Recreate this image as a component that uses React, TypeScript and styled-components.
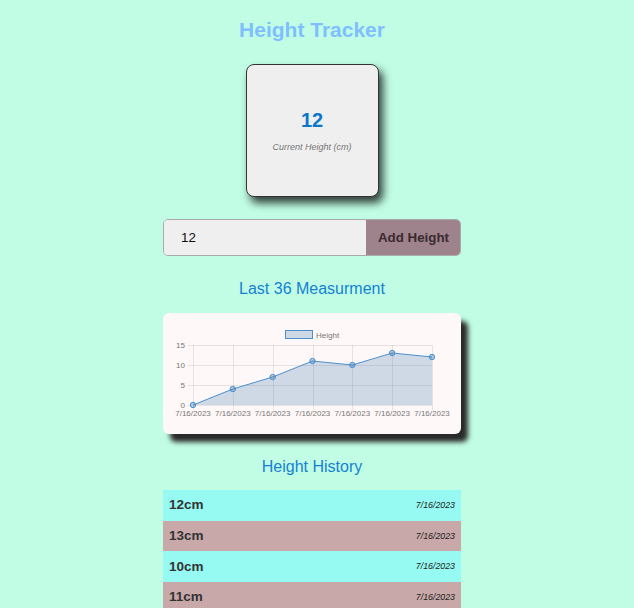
import React, { useState } from "react";
import styled, { createGlobalStyle } from "styled-components";

const Global = createGlobalStyle`
  html, body { margin: 0; padding: 0; overflow: hidden; background: #c0fde4; }
  body { font-family: "Liberation Sans", Arial, sans-serif; }
`;

const Page = styled.div`
  width: 624px;
  display: flex;
  flex-direction: column;
  align-items: center;
`;

const Title = styled.h1`
  margin: 0;
  padding-top: 18px;
  font-size: 21px;
  line-height: 24px;
  font-weight: bold;
  color: #80bfff;
`;

const CurrentCard = styled.div`
  box-sizing: border-box;
  margin-top: 22px;
  width: 133px;
  height: 133px;
  border: 1px solid #333;
  border-radius: 8px;
  background: #efefef;
  box-shadow: 4px 6px 9px rgba(0, 0, 0, 0.75);
  display: flex;
  flex-direction: column;
  align-items: center;
  justify-content: center;
  gap: 10.5px;
`;

const BigValue = styled.div`
  font-size: 20px;
  line-height: 24px;
  font-weight: bold;
  color: #0a77c9;
`;

const SmallLabel = styled.div`
  font-size: 9px;
  line-height: 11px;
  font-style: italic;
  color: #777;
`;

const InputGroup = styled.form`
  box-sizing: border-box;
  margin-top: 22px;
  width: 298px;
  height: 37px;
  display: flex;
  border: 1px solid #aaa;
  border-radius: 5px;
  overflow: hidden;
  background: #efefef;
`;

const HeightInput = styled.input`
  flex: 1;
  min-width: 0;
  border: none;
  outline: none;
  background: #efefef;
  padding: 0 0 0 17px;
  font-family: "Liberation Sans", Arial, sans-serif;
  font-size: 13.333px;
  color: #111;
`;

const AddButton = styled.button`
  border: none;
  background: #9e828c;
  color: #3b2a30;
  font-family: "Liberation Sans", Arial, sans-serif;
  font-size: 13.333px;
  font-weight: bold;
  padding: 0 11px 0 12px;
  cursor: pointer;
`;

const SectionTitle = styled.h2<{ $gapBottom: number }>`
  margin: 24px 0 ${(p) => p.$gapBottom}px;
  font-size: 16px;
  line-height: 18px;
  font-weight: normal;
  color: #1581d3;
`;

const ChartCard = styled.div`
  width: 298px;
  height: 121px;
  border-radius: 6px;
  background: #fff8f8;
  box-shadow: 7px 8px 5px #2a2a2a;
`;

const HistoryList = styled.ul`
  list-style: none;
  margin: 0;
  padding: 0;
  width: 298px;
`;

const HistoryRow = styled.li<{ $alt: boolean }>`
  box-sizing: border-box;
  height: 30.7px;
  padding: 0 6px;
  display: flex;
  align-items: center;
  justify-content: space-between;
  background: ${(p) => (p.$alt ? "#c8a8a8" : "#96faf2")};
  color: #333;
`;

const RowValue = styled.span`
  font-size: 13.5px;
  line-height: 16px;
  font-weight: bold;
`;

const RowDate = styled.span`
  font-size: 8.8px;
  line-height: 11px;
  font-style: italic;
  color: #222;
`;

const data = [0, 4, 7, 11, 10, 13, 12];

function Chart() {
  const left = 30;
  const right = 269;
  const top = 32;
  const bottom = 92;
  const step = (right - left) / (data.length - 1);
  const xs = data.map((_, i) => left + i * step);
  const y = (v: number) => bottom - (v / 15) * (bottom - top);
  const pts = data.map((v, i) => `${xs[i]},${y(v)}`).join(" ");
  const area = `${left},${bottom} ${pts} ${right},${bottom}`;
  const grid = "rgba(0,0,0,0.09)";
  const textColor = "#777";
  return (
    <svg width="298" height="121" viewBox="0 0 298 121">
      <rect x="122.5" y="17.5" width="27" height="8" fill="rgba(63,124,176,0.25)" stroke="#4a8fd0" strokeWidth="1" />
      <text x="153" y="24.5" fontSize="8" fill={textColor} fontFamily="Liberation Sans, Arial, sans-serif">Height</text>
      {[0, 5, 10, 15].map((v) => (
        <g key={v}>
          <line x1="25" x2={right} y1={y(v) + 0.5} y2={y(v) + 0.5} stroke={grid} />
          <text x="22" y={y(v) + 3} fontSize="8" textAnchor="end" fill={textColor} fontFamily="Liberation Sans, Arial, sans-serif">{v}</text>
        </g>
      ))}
      {xs.map((x, i) => (
        <g key={i}>
          <line x1={Math.round(x) + 0.5} x2={Math.round(x) + 0.5} y1={top} y2={bottom + 5} stroke={grid} />
          <text x={x} y="103" fontSize="8" textAnchor="middle" fill={textColor} fontFamily="Liberation Sans, Arial, sans-serif">7/16/2023</text>
        </g>
      ))}
      <polygon points={area} fill="rgba(63,124,176,0.25)" />
      <polyline points={pts} fill="none" stroke="#4a8fd0" strokeWidth="1" />
      {data.map((v, i) => (
        <circle key={i} cx={xs[i]} cy={y(v)} r="2.7" fill="rgba(63,124,176,0.35)" stroke="#4a8fd0" strokeWidth="1" />
      ))}
    </svg>
  );
}

const history = [
  { h: 12, d: "7/16/2023" },
  { h: 13, d: "7/16/2023" },
  { h: 10, d: "7/16/2023" },
  { h: 11, d: "7/16/2023" },
];

export default function App() {
  const [value, setValue] = useState("12");
  return (
    <>
      <Global />
      <Page>
        <Title>Height Tracker</Title>
        <CurrentCard>
          <BigValue>12</BigValue>
          <SmallLabel>Current Height (cm)</SmallLabel>
        </CurrentCard>
        <InputGroup onSubmit={(e) => e.preventDefault()}>
          <HeightInput type="text" value={value} onChange={(e) => setValue(e.target.value)} />
          <AddButton type="submit">Add Height</AddButton>
        </InputGroup>
        <SectionTitle $gapBottom={15}>Last 36 Measurment</SectionTitle>
        <ChartCard>
          <Chart />
        </ChartCard>
        <SectionTitle $gapBottom={14}>Height History</SectionTitle>
        <HistoryList>
          {history.map((r, i) => (
            <HistoryRow key={i} $alt={i % 2 === 1}>
              <RowValue>{r.h}cm</RowValue>
              <RowDate>{r.d}</RowDate>
            </HistoryRow>
          ))}
        </HistoryList>
      </Page>
    </>
  );
}
